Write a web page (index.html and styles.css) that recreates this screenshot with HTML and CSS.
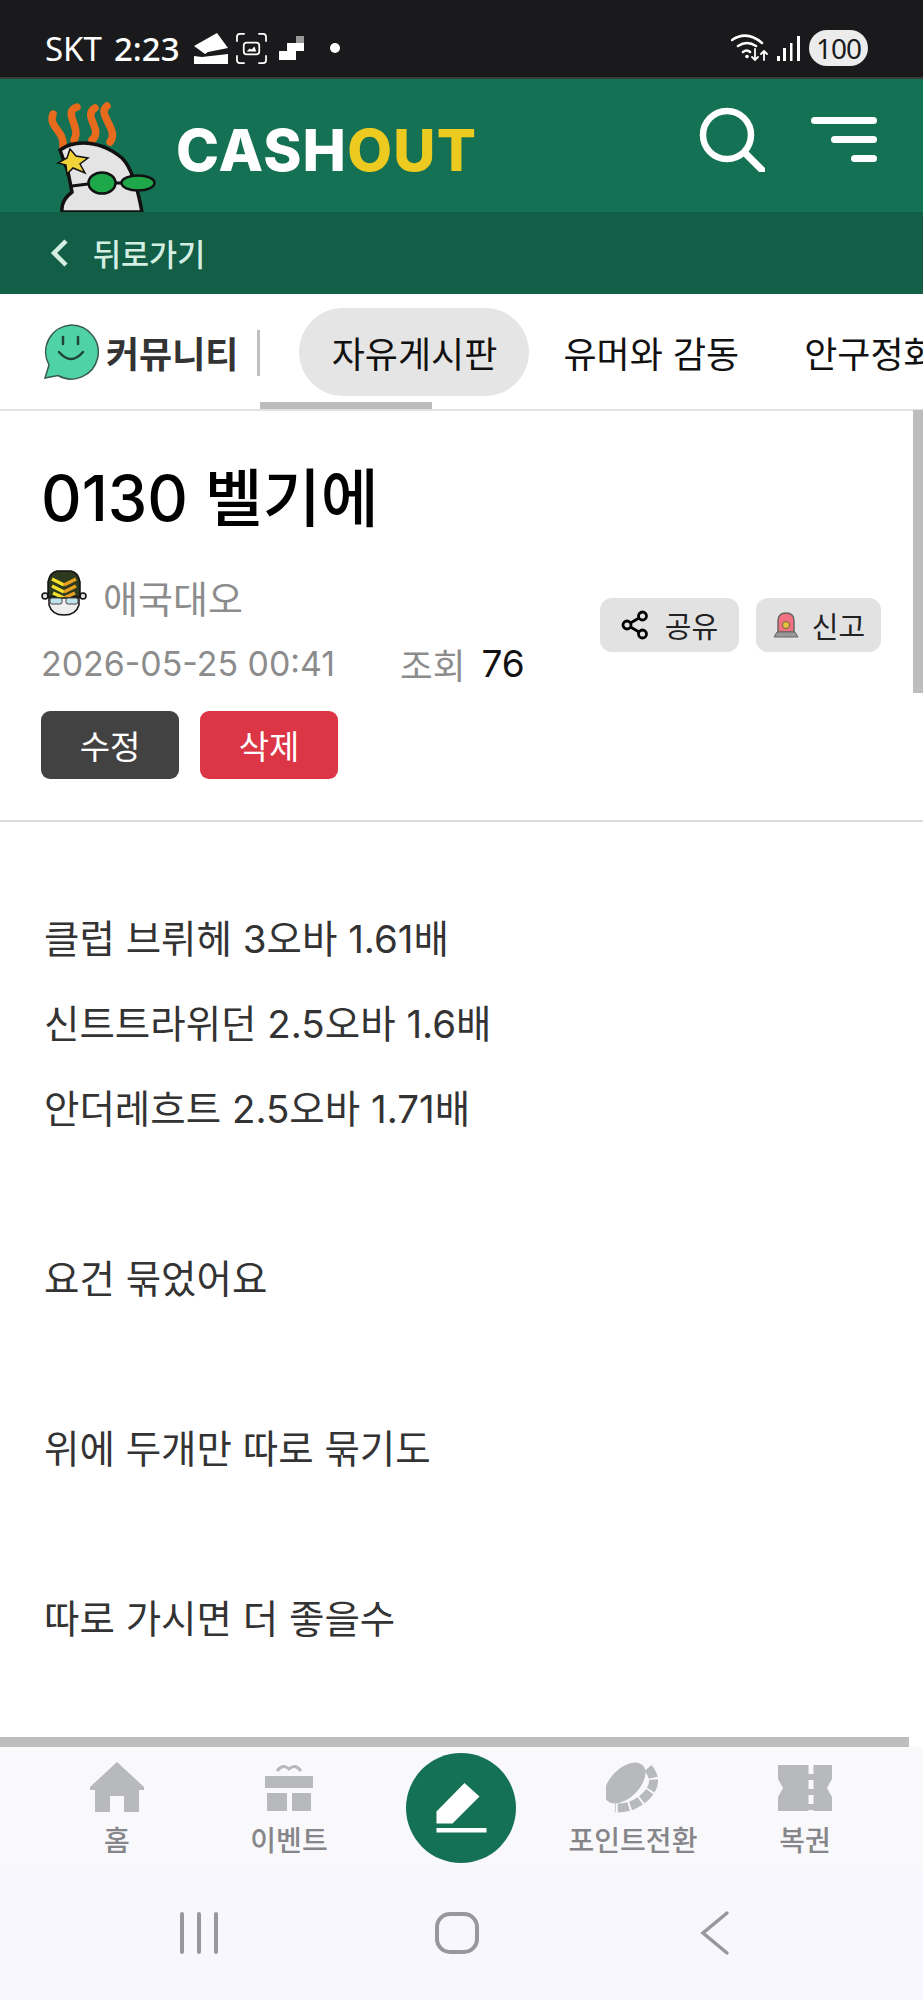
FILE: index.html
```html
<!DOCTYPE html>
<html lang="ko">
<head>
    <meta charset="UTF-8">
    <title>0130 벨기에</title>
    <link rel="stylesheet" href="styles.css">
</head>
<body>
<div id="screen">

    <div class="status">
        <span class="carrier">SKT</span>
        <span class="clock">2:23</span>
        <svg class="st-icon" width="34" height="31" viewBox="0 0 34 31"><path d="M0 13L23 0l11 15-20 4-3 2zM0 23l8 1 26-3v10H0z" fill="#fff"/></svg>
        <svg class="st-icon" width="31" height="31" viewBox="0 0 32 32" fill="none" stroke="#fff" stroke-width="1.8"><path d="M1 9V4q0-3 3-3h5M23 1h5q3 0 3 3v5M31 23v5q0 3-3 3h-5M9 31H4q-3 0-3-3v-5"/><rect x="8" y="10" width="16" height="12" rx="3"/><path d="M11 19l3-3 2 1 3-3 2 5z" fill="#fff" stroke="none"/></svg>
        <svg class="st-icon st-step" width="25" height="24" viewBox="0 0 25 24"><path d="M0 24V15h8V7h17v8H17v9z" fill="#fff"/><rect x="17" y="0" width="8" height="7" fill="#999"/></svg>
        <span class="dot"></span>
        <span class="st-space"></span>
        <svg class="st-icon-r" width="38" height="30" viewBox="0 0 38 30" fill="none" stroke="#fff" stroke-width="2.500" stroke-linecap="round"><path d="M1 7Q16-3 31 10M7 13q9-6 18 0M12 19q4-3 7 0"/><circle cx="16" cy="23.500" r="1.800" fill="#fff" stroke="none"/><path d="M24 16v11m-3-3l3 3 3-3M33 27V18m-3 3l3-3 3 3" stroke-width="1.800"/></svg>
        <svg class="signal" width="23" height="25" viewBox="0 0 23 25"><g fill="#fff"><rect x="0" y="20" width="3" height="5"/><rect x="6" y="12" width="3" height="13"/><rect x="13" y="7" width="2.500" height="18"/><rect x="20" y="0" width="3" height="25"/></g></svg>
        <span class="battery">100</span>
    </div>

    <div class="header">
        <svg class="mascot" width="112" height="112" viewBox="0 0 112 112">
            <path d="M7 14C2 28 19 30 17 47M31 7C16 12 36 28 28 40M49 8C36 16 58 30 46 40M61 6C50 14 74 30 64 42" fill="none" stroke="#e86a1c" stroke-width="7.500" stroke-linecap="round"/>
            <path d="M14 50C22 44 30 43 37 43C52 43 64 48 76 58C86 68 92 90 96 112H16C15 104 18 98 26 92L22 72z" fill="#e4e4e4" stroke="#111" stroke-width="3.500"/>
            <path d="M24 49l6 7 12 2-8 6 5 9-12-5-6 6-1-9-8-2 9-5z" fill="#f2d33a" stroke="#111" stroke-width="1.500"/>
            <path d="M26 86l16-2" stroke="#111" stroke-width="3"/>
            <path d="M69 83h8" stroke="#111" stroke-width="3"/>
            <ellipse cx="56" cy="83" rx="13.500" ry="10.500" fill="#1fa84a" stroke="#111" stroke-width="2.500"/>
            <ellipse cx="92" cy="83" rx="16.500" ry="7.500" fill="#1fa84a" stroke="#111" stroke-width="2.500"/>
        </svg>
        <div class="logo">CASH<span class="logo-y">OUT</span></div>
        <svg class="h-search" width="66" height="66" viewBox="0 0 66 66" fill="none" stroke="#fff" stroke-width="6.500" stroke-linecap="round"><circle cx="28" cy="29" r="24"/><path d="M46 47l17 17" stroke-width="7"/></svg>
        <div class="h-menu">
            <span class="bar bar-l"></span>
            <span class="bar bar-m"></span>
            <span class="bar bar-s"></span>
        </div>
    </div>

    <div class="backbar">
        <svg width="18" height="28" viewBox="0 0 18 28" fill="none" stroke="#d5eee2" stroke-width="4.500"><path d="M16 2L4 14l12 12"/></svg>
        <span>뒤로가기</span>
    </div>

    <div class="tabs">
        <svg class="smile" width="56" height="56" viewBox="0 0 56 56"><path d="M28 1a27 27 0 1 1-13 50.500L2 54l4-13A27 27 0 0 1 28 1z" fill="#4fd2a5" stroke="#3a5a50" stroke-width="1.500"/><g fill="none" stroke="#20443a" stroke-width="2.500" stroke-linecap="round"><path d="M16 28q12 14 24 0"/><path d="M20 13v7M35 13v7"/></g></svg>
        <span class="tabs-title">커뮤니티</span>
        <span class="tabs-sep"></span>
        <span class="tab tab-on">자유게시판</span>
        <span class="tab">유머와 감동</span>
        <span class="tab">안구정화</span>
        <span class="tabs-line"></span>
        <span class="tabs-thumb"></span>
    </div>

    <div class="post-head">
        <h1 class="post-title">0130 벨기에</h1>
        <div class="post-row">
            <div class="post-info">
                <div class="writer">
                    <svg width="46" height="46" viewBox="0 0 46 46">
                        <circle cx="4" cy="26" r="3" fill="#ddd" stroke="#111" stroke-width="1.500"/>
                        <circle cx="42" cy="26" r="3" fill="#ddd" stroke="#111" stroke-width="1.500"/>
                        <path d="M7 27V12Q9 2 16 1H30Q37 2 39 12V27z" fill="#2e3a20" stroke="#111" stroke-width="1.500"/>
                        <path d="M11 9l12 6M11 16l12 6M12 23l11 5" fill="none" stroke="#f2e02a" stroke-width="3.500"/>
                        <path d="M23 15l12-6M23 22l12-6M23 28l11-5" fill="none" stroke="#e8a020" stroke-width="3.500"/>
                        <path d="M8 28h30v7q-3 10-15 10T8 35z" fill="#eee" stroke="#111" stroke-width="1.500"/>
                        <rect x="9" y="28" width="12" height="6" rx="2" fill="#bfe3ea" stroke="#444"/>
                        <rect x="25" y="28" width="12" height="6" rx="2" fill="#bfe3ea" stroke="#444"/>
                    </svg>
                    <span class="writer-name">애국대오</span>
                </div>
                <div class="meta">
                    <span class="date">2026-05-25 00:41</span>
                    <span class="view-label">조회</span>
                    <span class="view-num">76</span>
                </div>
            </div>
            <div class="post-acts">
                <span class="pill pill-share">
                    <svg width="28" height="30" viewBox="0 0 28 30" fill="none" stroke="#000" stroke-width="2.800"><circle cx="21.500" cy="6" r="4"/><circle cx="6" cy="15" r="4"/><circle cx="21.500" cy="24" r="4"/><path d="M9.500 13l8.500-5M9.500 17l8.500 5"/></svg>
                    공유
                </span>
                <span class="pill pill-report">
                    <svg width="28" height="28" viewBox="0 0 28 28"><path d="M6 21V10q0-8 8-8t8 8v11z" fill="#f2707f" stroke="#666" stroke-width="1.500"/><path d="M2 26l3-5h18l3 5z" fill="#999" stroke="#666"/><circle cx="14" cy="14" r="3.500" fill="#e8c23a" stroke="#664"/></svg>
                    신고
                </span>
            </div>
        </div>
        <div class="post-btns">
            <span class="btn btn-dark">수정</span>
            <span class="btn btn-red">삭제</span>
        </div>
    </div>

    <div class="post-body">
        <p>클럽 브뤼헤 3오바 1.61배</p>
        <p>신트트라위던 2.5오바 1.6배</p>
        <p>안더레흐트 2.5오바 1.71배</p>
        <p>&nbsp;</p>
        <p>요건 묶었어요</p>
        <p>&nbsp;</p>
        <p>위에 두개만 따로 묶기도</p>
        <p>&nbsp;</p>
        <p>따로 가시면 더 좋을수</p>
    </div>

    <div class="spacer"></div>
    <div class="h-scroll"></div>

    <div class="bottom">
        <div class="nav-item">
            <svg class="nav-icon" width="54" height="52" viewBox="0 0 54 52"><path d="M27 0L0 25v3h5v22h15V34h14v16h15V28h5v-3z" fill="#b7b9bc"/></svg>
            <span>홈</span>
        </div>
        <div class="nav-item">
            <svg class="nav-icon" width="48" height="52" viewBox="0 0 48 52"><path d="M12 9q6-8 12-2 6-6 12 2" fill="none" stroke="#b7b9bc" stroke-width="3"/><path d="M0 14h48v12H0zM2 31h20v18H2zM27 31h19v18H27z" fill="#b7b9bc"/></svg>
            <span>이벤트</span>
        </div>
        <div class="nav-write">
            <svg width="56" height="50" viewBox="0 0 56 50"><path d="M31.500 0L46.500 13.500 19.500 40.500H3.500V28.500z" fill="#fff"/><rect x="3.500" y="45" width="50" height="4.500" fill="#fff"/></svg>
        </div>
        <div class="nav-item">
            <svg class="nav-icon" width="54" height="52" viewBox="0 0 54 52"><ellipse cx="19" cy="21" rx="25" ry="14.500" transform="rotate(-45 19 21)" fill="#b7b9bc"/><path d="M42 6Q54 20 40 34 27 47 9 46" fill="none" stroke="#b7b9bc" stroke-width="9" stroke-dasharray="11 2"/></svg>
            <span>포인트전환</span>
        </div>
        <div class="nav-item">
            <svg class="nav-icon" width="54" height="52" viewBox="0 0 54 52"><path d="M0 3h54v14l-5 9 5 9v14H0V35l5-9-5-9z" fill="#b7b9bc"/><path d="M33 3v46" stroke="#f9f9fb" stroke-width="5" stroke-dasharray="9 6"/></svg>
            <span>복권</span>
        </div>
    </div>

    <div class="sysnav">
        <svg width="42" height="42" viewBox="0 0 42 42" fill="none" stroke="#97979c" stroke-width="4" stroke-linecap="round"><path d="M4 2v38M21 2v38M38 2v38"/></svg>
        <svg width="46" height="44" viewBox="0 0 46 44" fill="none" stroke="#97979c" stroke-width="4"><rect x="3" y="3" width="40" height="38" rx="13"/></svg>
        <svg width="30" height="46" viewBox="0 0 30 46" fill="none" stroke="#97979c" stroke-width="3.500" stroke-linecap="round"><path d="M27 3L3 23l24 20"/></svg>
    </div>

    <div class="v-scroll"></div>

</div>
</body>
</html>
```

FILE: styles.css
```css
* {
    margin: 0;
    padding: 0;
    box-sizing: border-box;
}

html, body {
    width: 923px;
    height: 2000px;
    overflow: hidden;
    background: #ffffff;
}

svg {
    display: block;
    flex: none;
}

#screen {
    width: 923px;
    height: 2000px;
    position: relative;
    display: flex;
    flex-direction: column;
    font-family: "Liberation Sans", "Noto Sans CJK KR", sans-serif;
    overflow: hidden;
}

.status {
    height: 79px;
    flex: none;
    background: #1a1a1c;
    border-bottom: 2px solid #3a3c3c;
    display: flex;
    align-items: center;
    padding: 19px 55px 0 45px;
    color: #ffffff;
}

.carrier {
    font-family: "Noto Sans", sans-serif;
    font-size: 33px;
    margin-right: 12px;
}

.clock {
    font-family: "Noto Sans", sans-serif;
    font-size: 33px;
    font-weight: 500;
    margin-right: 14px;
}

.st-icon {
    margin-right: 8px;
}

.st-step {
    margin-left: 4px;
}

.dot {
    width: 10px;
    height: 10px;
    border-radius: 50%;
    background: #ffffff;
    margin-left: 18px;
}

.st-space {
    flex: 1;
}

.signal {
    margin: 0 9px 0 8px;
}

.battery {
    width: 59px;
    height: 36px;
    border-radius: 18px;
    background: #ececec;
    color: #1a1a1c;
    font-family: "Noto Sans", sans-serif;
    font-size: 28px;
    letter-spacing: -1px;
    display: flex;
    align-items: center;
    justify-content: center;
}

.header {
    height: 133px;
    flex: none;
    background: #157154;
    display: flex;
    align-items: flex-end;
    padding-left: 46px;
    overflow: hidden;
}

.mascot {
    width: 112px;
    height: 112px;
    margin-right: 18px;
}

.logo {
    font-family: "Inter", "Liberation Sans", sans-serif;
    font-weight: 800;
    font-size: 58px;
    letter-spacing: 1.2px;
    color: #ffffff;
    align-self: center;
    margin-top: 9px;
}

.logo-y {
    color: #ecca1f;
}

.h-search {
    margin-left: auto;
    align-self: center;
    margin-right: 46px;
    margin-top: -13px;
}

.h-menu {
    align-self: center;
    width: 66px;
    margin-right: 46px;
    margin-top: -13px;
    display: flex;
    flex-direction: column;
    align-items: flex-end;
    gap: 12px;
}

.bar {
    display: block;
    height: 7px;
    border-radius: 4px;
    background: #ffffff;
}

.bar-l { width: 66px; }
.bar-m { width: 46px; }
.bar-s { width: 26px; }

.backbar {
    height: 82px;
    flex: none;
    background: #125e46;
    display: flex;
    align-items: center;
    padding-left: 50px;
    gap: 25px;
    color: #d5eee2;
    font-family: "Noto Sans CJK KR", sans-serif;
    font-weight: 500;
    font-size: 30.500px;
}

.tabs {
    height: 117px;
    flex: none;
    position: relative;
    display: flex;
    align-items: center;
    border-bottom: 2px solid #e2e2e2;
    padding-left: 43px;
    white-space: nowrap;
    overflow: hidden;
}

.tabs-title {
    font-family: "Noto Sans CJK KR", sans-serif;
    font-weight: 700;
    font-size: 36px;
    color: #333333;
    margin-left: 7px;
}

.tabs-sep {
    width: 3px;
    height: 46px;
    flex: none;
    background: #bfbfbf;
    margin: 2px 39px 0 19px;
}

.tab {
    font-family: "Noto Sans CJK KR", sans-serif;
    font-size: 36px;
    color: #111111;
    flex: none;
    margin-right: 65px;
}

.tab-on {
    background: #e5e5e5;
    height: 88px;
    line-height: 88px;
    width: 230px;
    text-align: center;
    border-radius: 44px;
    margin-right: 34px;
}

.tabs-line {
    position: absolute;
    left: 0;
    bottom: -2px;
    width: 260px;
    height: 2px;
    background: #bcbcbc;
}

.tabs-thumb {
    position: absolute;
    left: 260px;
    bottom: -2px;
    width: 172px;
    height: 9px;
    background: #bcbcbc;
}

.post-head {
    flex: none;
    height: 411px;
    border-bottom: 2px solid #dddddd;
    padding: 0 42px 0 41px;
}

.post-title {
    font-family: "Inter", "Noto Sans CJK KR", sans-serif;
    font-weight: 500;
    font-size: 63px;
    color: #000000;
    line-height: 72px;
    padding-top: 51px;
    height: 157px;
}

.post-row {
    display: flex;
    align-items: center;
    justify-content: space-between;
}

.post-info {
    flex: none;
}

.writer {
    display: flex;
    align-items: center;
    gap: 16px;
    height: 50px;
}

.writer-name {
    font-family: "Noto Sans CJK KR", sans-serif;
    font-size: 38px;
    color: #8c8c8c;
    margin-top: 6px;
}

.meta {
    display: flex;
    align-items: center;
    height: 60px;
    margin-top: 15px;
}

.date {
    font-family: "Inter", sans-serif;
    font-size: 33.900px;
    color: #8c8c8c;
    margin-right: 65px;
}

.view-label {
    font-family: "Noto Sans CJK KR", sans-serif;
    font-size: 35.500px;
    color: #8c8c8c;
    margin-right: 16px;
}

.view-num {
    font-family: "Inter", sans-serif;
    font-size: 37px;
    color: #111111;
}

.post-acts {
    display: flex;
    gap: 17px;
    margin-top: -12px;
}

.pill {
    height: 54px;
    background: #e2e2e2;
    border-radius: 12px;
    display: flex;
    align-items: center;
    justify-content: center;
    font-family: "Noto Sans CJK KR", sans-serif;
    font-size: 29px;
    color: #222222;
}

.pill-share {
    width: 139px;
    gap: 16px;
}

.pill-report {
    width: 125px;
    gap: 12px;
}

.post-btns {
    display: flex;
    gap: 21px;
    margin-top: 18px;
}

.btn {
    width: 138px;
    height: 68px;
    border-radius: 9px;
    color: #ffffff;
    font-family: "Noto Sans CJK KR", sans-serif;
    font-size: 33px;
    display: flex;
    align-items: center;
    justify-content: center;
}

.btn-dark { background: #424242; }
.btn-red { background: #dc3545; }

.post-body {
    flex: none;
    padding: 75px 44px 0;
    font-family: "Inter", "Noto Sans CJK KR", sans-serif;
    font-size: 38.500px;
    color: #333333;
}

.post-body p {
    height: 85px;
    line-height: 85px;
}

.spacer {
    flex: 1;
}

.h-scroll {
    flex: none;
    width: 909px;
    height: 10px;
    background: #bdbdbd;
}

.v-scroll {
    position: absolute;
    top: 410px;
    right: 0;
    width: 10px;
    height: 283px;
    background: #bdbdbd;
}

.bottom {
    height: 123px;
    flex: none;
    background: #f9f9fb;
    display: grid;
    grid-template-columns: repeat(5, 172px);
    padding-left: 31px;
    align-items: start;
    justify-items: center;
}

.nav-item {
    display: flex;
    flex-direction: column;
    align-items: center;
    padding-top: 15px;
    font-family: "Noto Sans CJK KR", sans-serif;
    font-weight: 500;
    font-size: 28px;
    line-height: 40px;
    color: #85858a;
    white-space: nowrap;
}

.nav-icon {
    margin-bottom: 5px;
    filter: blur(0.7px);
}

.nav-write {
    width: 110px;
    height: 110px;
    border-radius: 50%;
    background: #157154;
    margin-top: 6px;
    display: flex;
    align-items: center;
    justify-content: center;
}

.sysnav {
    height: 130px;
    flex: none;
    background: #f8f7fd;
    display: grid;
    grid-template-columns: repeat(3, 258px);
    padding: 40px 0 0 70px;
    justify-items: center;
    align-items: center;
    align-content: start;
}
```
